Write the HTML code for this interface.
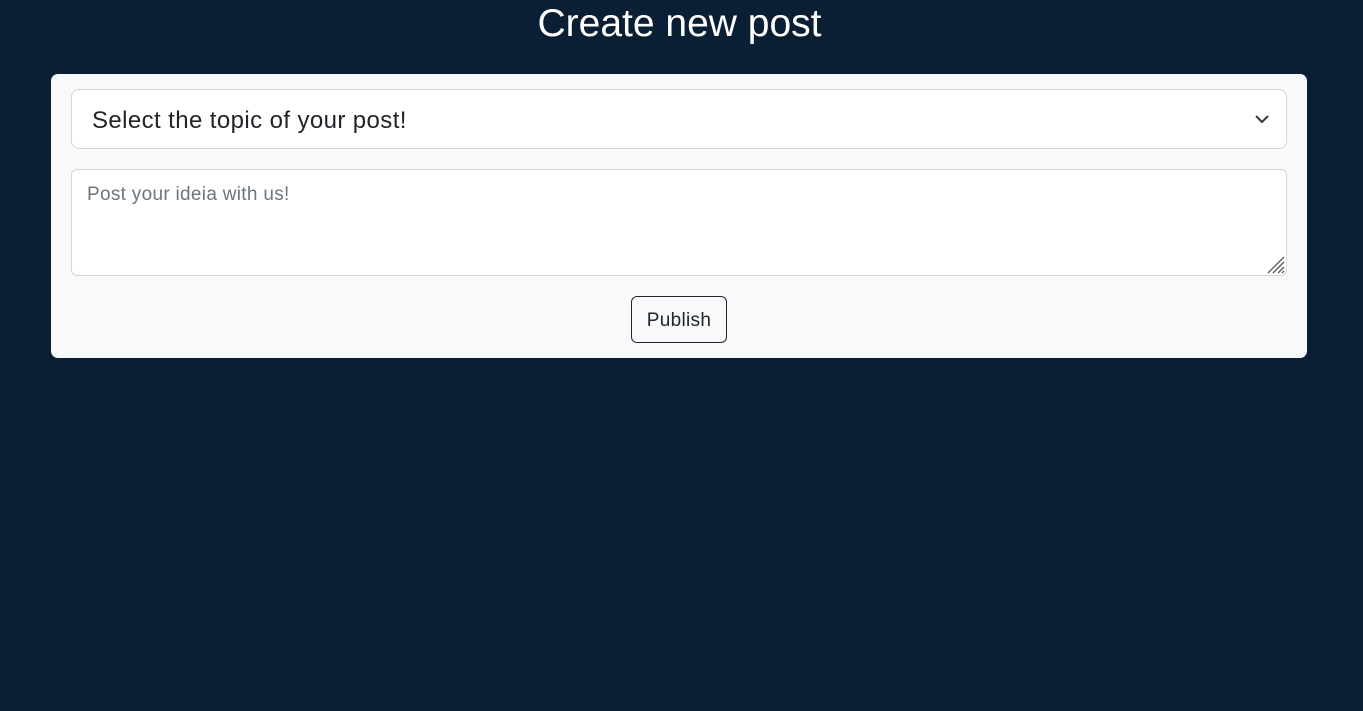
<!DOCTYPE html>
<html><head><style>
body{margin:0;background:#0a1f33;font-family:"Liberation Sans",sans-serif;width:1363px;height:711px;overflow:hidden;position:relative}
h1{position:absolute;left:0;right:0;top:2px;margin:0;text-align:center;color:#fff;font-weight:400;font-size:39px;line-height:44px;padding-right:4px}
.card{position:absolute;left:51px;top:74px;width:1256px;height:284px;background:#f8f9fa;border-radius:7px}
.sel{position:absolute;left:20px;top:15px;width:1214px;height:58px;background:#fff;border:1px solid #d3d6da;border-radius:8px}
.sel span{position:absolute;left:20px;top:17px;font-size:24px;letter-spacing:0.4px;color:#212529}
.sel svg{position:absolute;right:16px;top:23px}
.ta{position:absolute;left:20px;top:95px;width:1214px;height:105px;background:#fff;border:1px solid #d3d6da;border-radius:6px}
.ta span{position:absolute;left:15px;top:14px;font-size:19px;letter-spacing:0.3px;color:#6c757d}
.ta svg{position:absolute;right:1px;bottom:1px}
.btn{position:absolute;left:580px;top:222px;width:96px;height:47px;border:1px solid #212529;border-radius:6px;box-sizing:border-box;text-align:center;line-height:47px;font-size:19px;letter-spacing:0.3px;color:#212529}
</style></head><body>
<h1>Create new post</h1>
<div class="card">
<div class="sel"><span>Select the topic of your post!</span><svg width="16" height="12" viewBox="0 0 16 12"><path d="M2 3l6 6 6-6" fill="none" stroke="#343a40" stroke-width="2"/></svg></div>
<div class="ta"><span>Post your ideia with us!</span><svg width="18" height="18" viewBox="0 0 18 18"><path d="M17 1L1 17M17 6L6 17M17 11L11 17M17 15L15 17" stroke="#555" stroke-width="1.3"/></svg></div>
<div class="btn">Publish</div>
</div>
</body></html>
